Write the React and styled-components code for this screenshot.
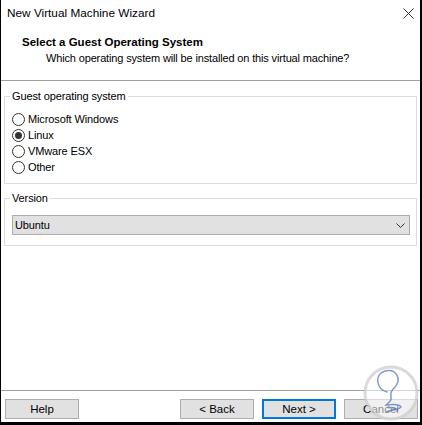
import React from 'react';
import styled, { createGlobalStyle } from 'styled-components';

const GlobalStyle = createGlobalStyle`
  html, body {
    margin: 0;
    padding: 0;
    background: #fff;
  }
  body {
    font-family: "Liberation Sans", Arial, sans-serif;
    font-size: 11px;
    letter-spacing: -0.12px;
    color: #000;
  }
`;

const Window = styled.div`
  position: relative;
  box-sizing: border-box;
  width: 422px;
  height: 425px;
  display: flex;
  flex-direction: column;
  background: #fff;
  border-left: 1px solid #000;
  border-right: 2px solid #000;
  border-bottom: 3px solid #000;
  overflow: hidden;
`;

const TitleBar = styled.div`
  height: 26px;
  display: flex;
  align-items: center;
  justify-content: space-between;
  padding: 0 6px 0 6px;
  font-size: 11.8px;
  letter-spacing: 0;
`;

const TitleText = styled.span`
  line-height: 16px;
`;

const CloseIcon = styled.svg`
  width: 11px;
  height: 11px;
  margin-top: 1px;
`;

const Header = styled.div`
  padding: 8px 0 14px 21px;
  border-bottom: 1px solid #a0a0a0;
`;

const HeaderTitle = styled.div`
  font-weight: bold;
  font-size: 11.5px;
  letter-spacing: 0;
  line-height: 16px;
`;

const HeaderSub = styled.div`
  line-height: 16px;
  padding-left: 24px;
  letter-spacing: -0.15px;
`;

const Body = styled.div`
  flex: 1;
  display: flex;
  flex-direction: column;
  gap: 6px;
  padding: 7px 3px 0 3px;
`;

const Group = styled.fieldset`
  margin: 0;
  border: 1px solid #dcdcdc;
  padding: ${props => props.$pad};
  min-width: 0;
`;

const Legend = styled.legend`
  padding: 0 2px;
  margin-left: -2px;
  line-height: 16px;
`;

const RadioList = styled.div`
  display: flex;
  flex-direction: column;
  padding-top: 7px;
`;

const RadioRow = styled.label`
  display: flex;
  align-items: center;
  gap: 3px;
  height: 16px;
  line-height: 16px;
`;

const RadioCircle = styled.span`
  box-sizing: border-box;
  width: 13px;
  height: 13px;
  border: 1px solid #333;
  border-radius: 50%;
  background: #fff;
  display: flex;
  align-items: center;
  justify-content: center;
  &::after {
    content: '';
    width: 7px;
    height: 7px;
    border-radius: 50%;
    background: ${props => (props.$checked ? '#333' : 'transparent')};
  }
`;

const Select = styled.div`
  box-sizing: border-box;
  height: 20px;
  border: 1px solid #adadad;
  background: #e1e1e1;
  display: flex;
  align-items: center;
  justify-content: space-between;
  padding: 0 4px 0 2px;
  line-height: 16px;
`;

const Chevron = styled.svg`
  width: 9px;
  height: 5px;
`;

const Footer = styled.div`
  border-top: 1px solid #a0a0a0;
  display: flex;
  align-items: center;
  padding: 8px 2px 3px 4px;
`;

const Spacer = styled.div`
  flex: 1;
`;

const Button = styled.button`
  box-sizing: border-box;
  width: 74px;
  height: 20px;
  margin-left: ${props => props.$gap || 0}px;
  padding: 0;
  font-family: inherit;
  font-size: 11.5px;
  color: #000;
  background: #e1e1e1;
  border: ${props => (props.$primary ? '2px solid #0078d7' : '1px solid #adadad')};
  line-height: 16px;
`;

const Watermark = styled.svg`
  position: absolute;
  left: 360px;
  top: 362px;
  width: 60px;
  height: 60px;
  pointer-events: none;
`;

const options = ['Microsoft Windows', 'Linux', 'VMware ESX', 'Other'];

const App = () => {
  const selected = 'Linux';
  return (
    <>
      <GlobalStyle />
      <Window>
        <TitleBar>
          <TitleText>New Virtual Machine Wizard</TitleText>
          <CloseIcon viewBox="0 0 11 11">
            <path d="M0.5 0.5 L10.5 10.5 M10.5 0.5 L0.5 10.5" stroke="#222" strokeWidth="0.9" fill="none" />
          </CloseIcon>
        </TitleBar>
        <Header>
          <HeaderTitle>Select a Guest Operating System</HeaderTitle>
          <HeaderSub>Which operating system will be installed on this virtual machine?</HeaderSub>
        </Header>
        <Body>
          <Group $pad="0 7px 8px 7px">
            <Legend>Guest operating system</Legend>
            <RadioList>
              {options.map(opt => (
                <RadioRow key={opt}>
                  <RadioCircle $checked={opt === selected} />
                  {opt}
                </RadioRow>
              ))}
            </RadioList>
          </Group>
          <Group $pad="9px 6px 10px 7px">
            <Legend>Version</Legend>
            <Select>
              <span>Ubuntu</span>
              <Chevron viewBox="0 0 9 5">
                <path d="M0.5 0.5 L4.5 4.5 L8.5 0.5" stroke="#333" strokeWidth="1" fill="none" />
              </Chevron>
            </Select>
          </Group>
        </Body>
        <Footer>
          <Button>Help</Button>
          <Spacer />
          <Button>&lt; Back</Button>
          <Button $primary $gap={8}>Next &gt;</Button>
          <Button $gap={8}>Cancel</Button>
        </Footer>
        <Watermark viewBox="0 0 60 60">
          <circle cx="30" cy="31" r="26" fill="rgba(255,255,255,0.55)" stroke="rgba(205,205,205,0.75)" strokeWidth="3" />
          <path
            d="M26 30 C15 27 13 12 24 9 C35 6 41 17 34 25 C31 28 29 30 30 36 C31 39 27 41 25 43 C29 43 38 41 40 45 C36 49 28 48 25 50 M27 45 C33 46 38 47 36 49"
            stroke="rgba(80,110,190,0.7)"
            strokeWidth="1.5"
            fill="none"
            strokeLinecap="round"
          />
        </Watermark>
      </Window>
    </>
  );
};

export default App;
